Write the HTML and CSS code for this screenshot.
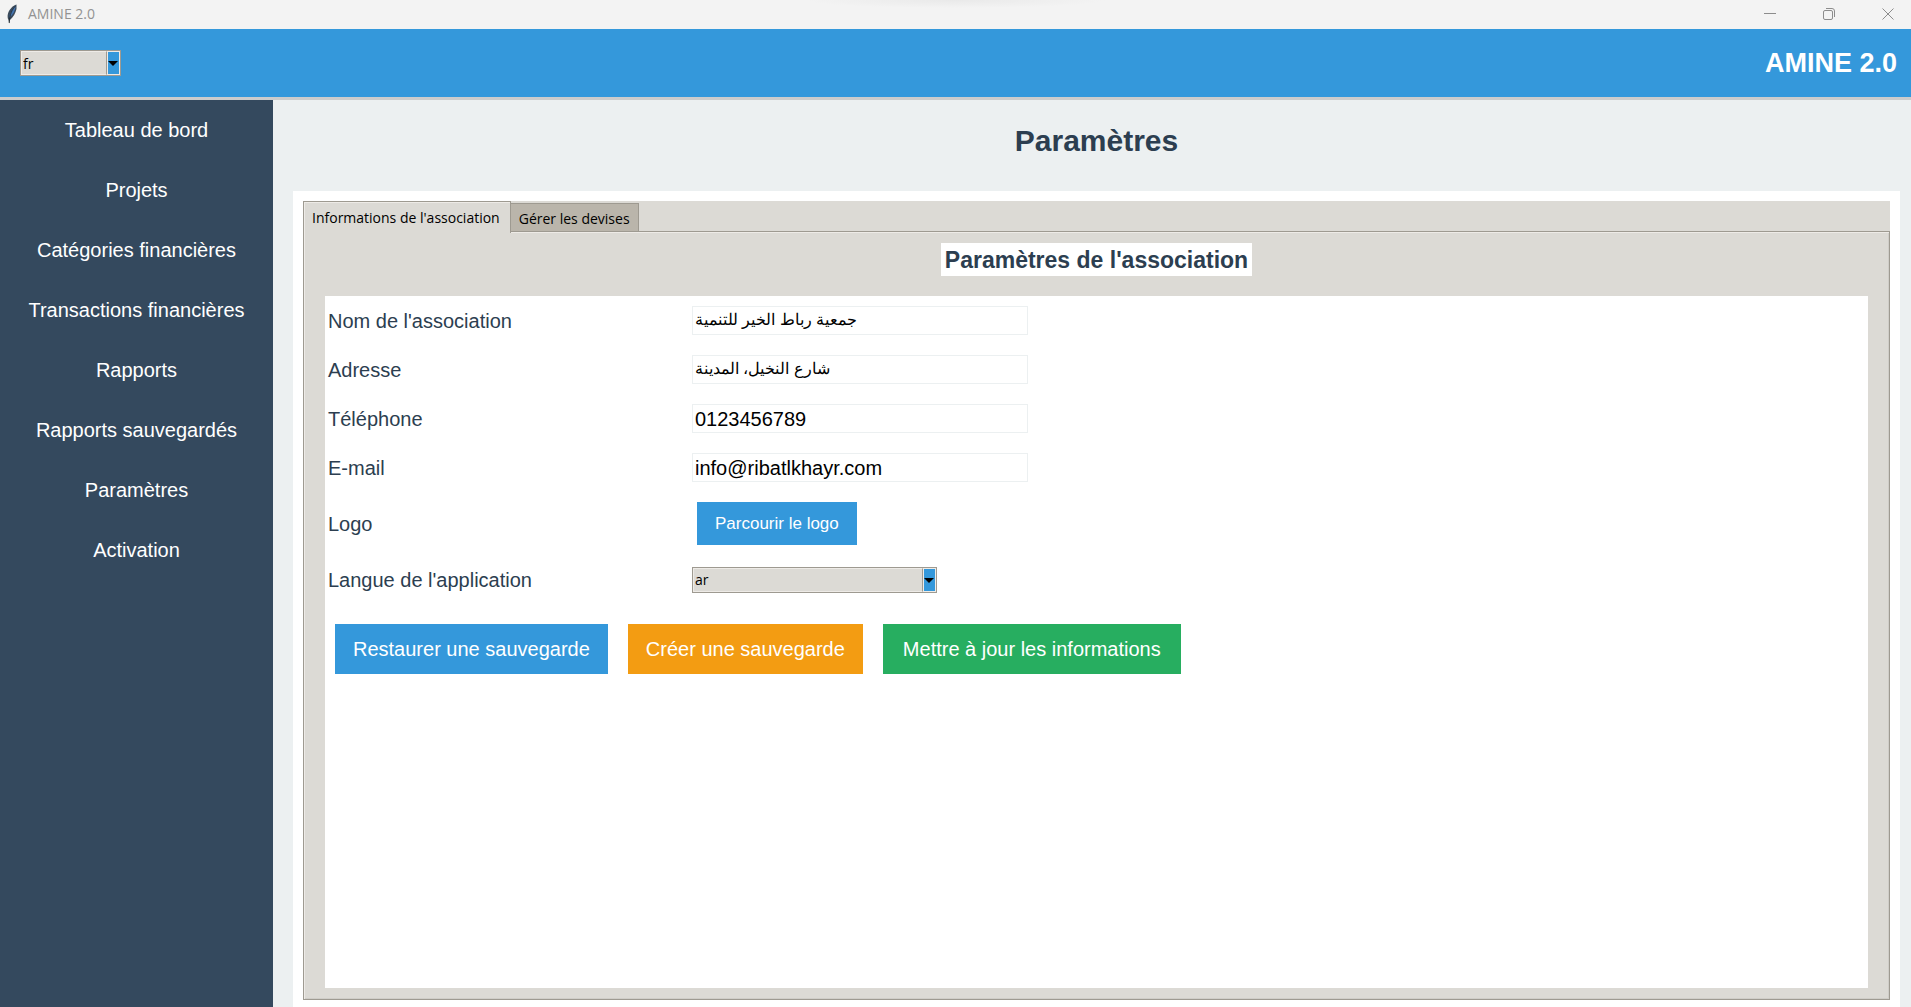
FILE: index.html
```html
<!DOCTYPE html>
<html lang="fr">
<head>
  <meta charset="UTF-8" />
  <meta name="viewport" content="width=device-width, initial-scale=1.0" />
  <title>AMINE 2.0</title>
  <link rel="stylesheet" href="styles.css">
</head>
<body>
<div class="titlebar">
  <svg class="feather" width="12" height="20" viewBox="0 0 12 20">
    <path d="M10.500 0.500C7 1.500 3.500 5 2 9.500C1.300 12 1.600 14.500 2.500 16L3.200 19.500L4 16C7.500 13 9.500 9 10.500 5Z" fill="#3b4a5a"/>
    <path d="M9.800 1.500C6.500 4 4 8.500 3 14C7 11 9.300 7 9.800 1.500Z" fill="#4274b0"/>
    <path d="M9.500 2C6.500 5 3.500 10 3.200 19" fill="none" stroke="#1d2226" stroke-width="0.800"/>
  </svg>
  <span class="titlebar-text">AMINE 2.0</span>
  <div class="window-buttons">
    <button type="button" aria-label="Réduire">
      <svg width="12" height="12" viewBox="0 0 12 12"><path d="M0 5.500H12"/></svg>
    </button>
    <button type="button" aria-label="Restaurer">
      <svg width="12" height="12" viewBox="0 0 12 12"><rect x="0.500" y="2.500" width="9" height="9" rx="1.500"/><path d="M3 0.500H9Q11.500 0.500 11.500 3V9"/></svg>
    </button>
    <button type="button" aria-label="Fermer">
      <svg width="12" height="12" viewBox="0 0 12 12"><path d="M0.500 0.500L11.500 11.500M11.500 0.500L0.500 11.500"/></svg>
    </button>
  </div>
</div>

<header>
  <div class="combo combo-small">
    <select aria-label="Langue">
      <option selected>fr</option>
      <option>ar</option>
    </select>
  </div>
  <strong class="brand">AMINE 2.0</strong>
</header>

<div class="layout">
  <nav>
    <button type="button">Tableau de bord</button>
    <button type="button">Projets</button>
    <button type="button">Catégories financières</button>
    <button type="button">Transactions financières</button>
    <button type="button">Rapports</button>
    <button type="button">Rapports sauvegardés</button>
    <button type="button">Paramètres</button>
    <button type="button">Activation</button>
  </nav>

  <main>
    <h1>Paramètres</h1>
    <div class="card">
      <div class="tabs" role="tablist">
        <button type="button" role="tab" class="tab active" aria-selected="true">Informations de l'association</button>
        <button type="button" role="tab" class="tab" aria-selected="false">Gérer les devises</button>
      </div>
      <div class="tab-page">
        <h2>Paramètres de l'association</h2>
        <form>
          <div class="row">
            <label for="nom">Nom de l'association</label>
            <input type="text" id="nom" lang="ar" value="جمعية رباط الخير للتنمية">
          </div>
          <div class="row">
            <label for="adresse">Adresse</label>
            <input type="text" id="adresse" lang="ar" value="شارع النخيل، المدينة">
          </div>
          <div class="row">
            <label for="telephone">Téléphone</label>
            <input type="text" id="telephone" value="0123456789">
          </div>
          <div class="row">
            <label for="email">E-mail</label>
            <input type="text" id="email" value="info@ribatlkhayr.com">
          </div>
          <div class="row row-logo">
            <label for="logo">Logo</label>
            <button type="button" id="logo" class="btn btn-small blue">Parcourir le logo</button>
          </div>
          <div class="row">
            <label for="langue">Langue de l'application</label>
            <div class="combo">
              <select id="langue">
                <option selected>ar</option>
                <option>fr</option>
              </select>
            </div>
          </div>
          <div class="actions">
            <button type="button" class="btn blue">Restaurer une sauvegarde</button>
            <button type="button" class="btn orange">Créer une sauvegarde</button>
            <button type="button" class="btn green">Mettre à jour les informations</button>
          </div>
        </form>
      </div>
    </div>
  </main>
</div>
</body>
</html>
```

FILE: styles.css
```css
*, *::before, *::after {
  box-sizing: border-box;
}
body {
  margin: 0;
  min-height: 100vh;
  display: flex;
  flex-direction: column;
  font-family: "Liberation Sans", Arial, sans-serif;
  font-size: 20px;
  color: #2c3e50;
  background: #ecf0f1;
}
button, input, select {
  font-family: inherit;
  font-size: inherit;
  margin: 0;
  border: none;
  border-radius: 0;
}

/* window title bar */
.titlebar {
  display: flex;
  align-items: center;
  height: 29px;
  padding: 0 0 2px 6px;
  background: radial-gradient(ellipse 150px 8px at 50% 0, #e9e9e9, #f3f3f3);
}
.titlebar-text {
  margin-left: 10px;
  font-family: "Open Sans", sans-serif;
  font-size: 14px;
  color: #929292;
}
.window-buttons {
  display: flex;
  margin-left: auto;
}
.window-buttons button {
  display: flex;
  align-items: center;
  justify-content: center;
  width: 59px;
  height: 27px;
  padding: 0 0 0 12px;
  background: none;
}
.window-buttons svg {
  fill: none;
  stroke: #8c8c8c;
}

header {
  display: flex;
  align-items: center;
  justify-content: space-between;
  height: 71px;
  padding: 0 14px 0 20px;
  background: #3498db;
  border-bottom: 3px solid #ccc;
}
.brand {
  font-size: 27px;
  color: white;
}

/* combobox */
.combo {
  position: relative;
  width: 245px;
  height: 26px;
}
.combo-small {
  width: 101px;
}
.combo select {
  display: block;
  appearance: none;
  width: 100%;
  height: 100%;
  padding: 0 16px 0 2px;
  font-family: "Open Sans", sans-serif;
  font-size: 14px;
  color: black;
  background: #dcdad5;
  border: 1px solid #9e9a91;
  box-shadow: inset 0 0 0 1px #eeebe7;
}
.combo::before {
  content: "";
  position: absolute;
  top: 1px;
  right: 1px;
  width: 14px;
  height: 24px;
  background: #3498db;
  border: 1px solid #eeebe7;
  border-left-color: #9e9a91;
  box-shadow: inset 1px 0 0 #eeebe7;
  pointer-events: none;
}
.combo::after {
  content: "";
  position: absolute;
  top: 11px;
  right: 3px;
  border: 5px solid transparent;
  border-top-color: black;
  border-bottom: none;
  pointer-events: none;
}

.layout {
  display: flex;
  flex: 1;
}
nav {
  flex: none;
  width: 273px;
  background: #34495e;
}
nav button {
  display: block;
  width: 100%;
  height: 60px;
  background: none;
  color: white;
}
main {
  display: flex;
  flex-direction: column;
  flex: 1;
  padding: 0 11px 0 20px;
}
h1 {
  margin: 0;
  padding: 21px 0 30px;
  font-size: 30px;
  line-height: 40px;
  text-align: center;
}
.card {
  display: flex;
  flex-direction: column;
  flex: 1;
  padding: 10px 10px 7px;
  background: white;
}

/* notebook tabs */
.tabs {
  display: flex;
  align-items: flex-end;
  height: 30px;
  background: #dcdad5;
}
.tab {
  height: 28px;
  padding: 2px 8px 0;
  font-family: "Open Sans", sans-serif;
  font-size: 14px;
  color: black;
  background: #bab5ab;
  border: 1px solid #9e9a91;
  border-left: none;
  border-bottom: none;
}
.tab.active {
  position: relative;
  height: 32px;
  margin-bottom: -2px;
  padding: 0 10px 0 8px;
  background: #dcdad5;
  border-left: 1px solid #9e9a91;
  box-shadow: inset 1px 1px 0 #eeebe7;
}
.tab-page {
  display: flex;
  flex-direction: column;
  flex: 1;
  padding: 11px 21px;
  background: #dcdad5;
  border: 1px solid #9e9a91;
  box-shadow: inset 1px 1px 0 #eeebe7, inset -1px -1px 0 #cfcdc8;
}
h2 {
  align-self: center;
  margin: 0 0 20px;
  padding: 1px 4px 0;
  font-size: 23px;
  line-height: 32px;
  background: white;
}
form {
  flex: 1;
  background: white;
}
.row {
  display: flex;
  align-items: center;
  height: 49px;
}
.row label {
  width: 367px;
  padding: 2px 0 0 3px;
}
.row input {
  width: 336px;
  height: 29px;
  padding: 1px 2px 0;
  color: black;
  background: white;
  border: 1px solid #ecf0f1;
}
.row input[lang="ar"] {
  padding: 0 2px 2px;
  font-size: 16px;
}
.row-logo {
  height: 63px;
}
.btn {
  height: 50px;
  padding: 0 18px;
  color: white;
}
.btn-small {
  height: 43px;
  margin-left: 5px;
  font-size: 17px;
}
.blue {
  background: #3498db;
}
.orange {
  background: #f39c12;
}
.green {
  padding: 0 20px;
  background: #27ae60;
}
.actions {
  display: flex;
  gap: 20px;
  padding: 20px 10px;
}
```
